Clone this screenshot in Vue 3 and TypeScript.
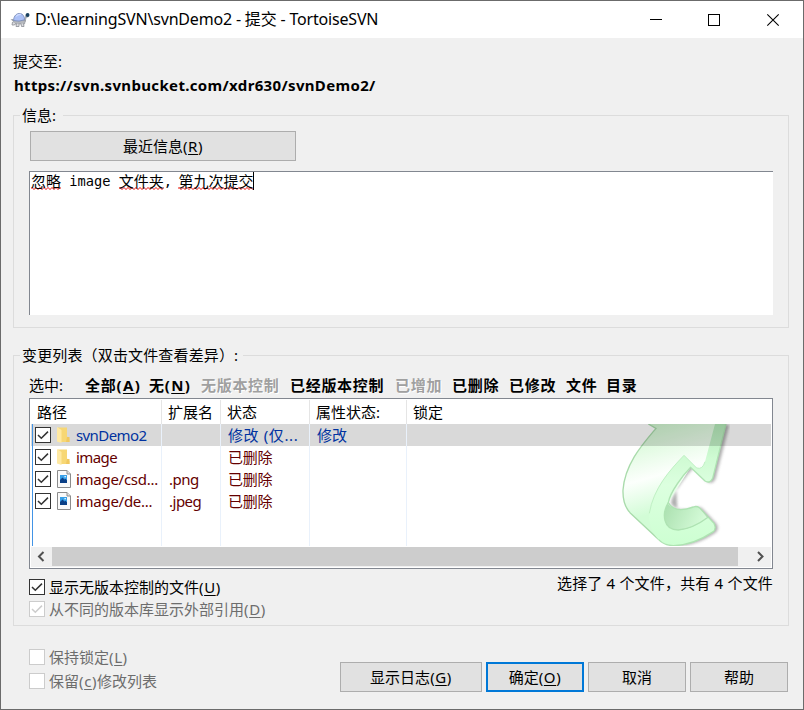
<script setup lang="ts">
import { ref } from 'vue'

interface Filter { label: string; key?: string; disabled?: boolean }
interface FileRow {
  name: string
  ext: string
  status: string
  prop: string
  kind: 'folder' | 'picture'
  state: 'modified' | 'deleted'
  checked: boolean
}

const filters: Filter[] = [
  { label: '全部', key: 'A' },
  { label: '无', key: 'N' },
  { label: '无版本控制', disabled: true },
  { label: '已经版本控制' },
  { label: '已增加', disabled: true },
  { label: '已删除' },
  { label: '已修改' },
  { label: '文件' },
  { label: '目录' },
]

const columns = ['路径', '扩展名', '状态', '属性状态:', '锁定']

const rows = ref<FileRow[]>([
  { name: 'svnDemo2', ext: '', status: '修改 (仅...', prop: '修改', kind: 'folder', state: 'modified', checked: true },
  { name: 'image', ext: '', status: '已删除', prop: '', kind: 'folder', state: 'deleted', checked: true },
  { name: 'image/csd...', ext: '.png', status: '已删除', prop: '', kind: 'picture', state: 'deleted', checked: true },
  { name: 'image/de...', ext: '.jpeg', status: '已删除', prop: '', kind: 'picture', state: 'deleted', checked: true },
])
const selected = ref(0)
const showUnversioned = ref(true)
</script>

<template>
  <div class="window">
    <header class="titlebar">
      <svg class="app-icon" width="20" height="17" viewBox="0 0 20 17">
        <path d="M3 10 L0.5 8.5 L3.5 8 Z" fill="#8d939b" />
        <path d="M14 9 L15.5 3.5 L19 2.5 L18.5 6 L16.5 7 L15.5 11 Z" fill="#a9aeb6" />
        <path d="M3 9.5 H15.5 L14.5 13 H4 Z" fill="#b4b7bc" stroke="#8a8d94" stroke-width=".6" />
        <path d="M2.5 11 L2 14 H4.5 L5.5 12.5 M6.5 12.5 L6 15.5 H9 L9 13 M11 12.5 L11.5 15.5 H14 L13.5 12.5" fill="#dcdde0" stroke="#8a8d94" stroke-width=".8" />
        <path d="M3.6 9.6 C3.4 1 14.4 -0.5 14.6 8.8 Q9 11 3.6 9.6 Z" fill="#abc0f6" stroke="#7486b4" stroke-width=".8" />
        <path d="M6 5.5 Q8 3 11 3.4" fill="none" stroke="#cfdbff" stroke-width="1.2" />
        <circle cx="17.6" cy="4" r="1.9" fill="#17405f" />
      </svg>
      <h1 class="title">D:\learningSVN\svnDemo2 - 提交 - TortoiseSVN</h1>
      <svg class="controls" width="130" height="14" viewBox="0 0 130 14" fill="none" stroke="#000">
        <path d="M0 6.5 H12 M58.5 1.5 H69.5 V12.5 H58.5 Z" shape-rendering="crispEdges" />
        <path d="M117.3 1.3 L128.7 12.7 M128.7 1.3 L117.3 12.7" stroke-width="1.1" />
      </svg>
    </header>

    <main class="client">
      <div class="target">提交至:</div>
      <div class="url">https://svn.svnbucket.com/xdr630/svnDemo2/</div>

      <section class="group message">
        <h2 class="legend">信息:</h2>
        <button class="btn recent">最近信息<span class="key">(<u>R</u>)</span></button>
        <div class="editor">
          <span class="squiggle">忽略</span><span class="mono">&nbsp;image&nbsp;</span><span class="squiggle">文件夹</span><span class="mono">,</span><span class="gap"></span><span class="squiggle">第九次提交</span><span class="caret"></span>
        </div>
      </section>

      <section class="group changes">
        <h2 class="legend long">变更列表（双击文件查看差异）:</h2>
        <div class="filters">
          <span class="filters-label">选中:</span>
          <b v-for="f in filters" :key="f.label" :class="{ off: f.disabled }">{{ f.label }}<span v-if="f.key" class="key">(<u>{{ f.key }}</u>)</span></b>
        </div>

        <div class="list">
          <div class="row head">
            <div v-for="c in columns" :key="c" class="cell">{{ c }}</div>
          </div>
          <div class="body">
            <svg class="watermark" width="110" height="122" viewBox="90 72 330 366">
              <defs>
                <linearGradient id="side" x1="0" y1="0" x2="0.25" y2="1">
                  <stop offset="0" stop-color="#c8f3c8" />
                  <stop offset=".25" stop-color="#e2fbe2" />
                  <stop offset=".5" stop-color="#fcfffc" />
                  <stop offset=".8" stop-color="#d2fcd6" />
                </linearGradient>
                <linearGradient id="front" x1="0" y1="0" x2="0" y2="1">
                  <stop offset="0" stop-color="#b3e9b8" />
                  <stop offset=".28" stop-color="#cffbd3" />
                  <stop offset=".5" stop-color="#dcffdf" />
                  <stop offset="1" stop-color="#cdffd2" />
                </linearGradient>
                <linearGradient id="inner" x1="0" y1="0" x2="1" y2=".3">
                  <stop offset="0" stop-color="#a9dfae" />
                  <stop offset="1" stop-color="#d5fbd8" />
                </linearGradient>
                <filter id="soft" x="-20%" y="-20%" width="140%" height="140%"><feGaussianBlur stdDeviation="5" /></filter>
              </defs>
              <path d="M240 72 L410 72 L368 235 Q360 252 345 243 L302 202 C280 225 240 275 235 308 C250 335 285 328 310 321 Q320 317 328 323 L372 370 Q380 385 370 395 C340 415 300 435 260 435 Z" fill="#777" opacity=".6" filter="url(#soft)" transform="translate(8 2)" />
              <path d="M175 72 L198 85 C160 130 105 190 99 270 C98 300 108 325 120 338 L205 418 L215 340 L302 202 L345 243 L368 235 L405 72 Z" fill="url(#side)" />
              <path d="M175 72 L198 85 C160 130 105 190 99 270 C98 300 108 325 120 338 L205 418" fill="none" stroke="#a9dbab" stroke-width="4" />
              <path d="M232 308 C215 340 218 390 265 390 C300 388 330 370 354 355 L328 323 Q320 317 310 321 C285 330 250 335 232 308 Z" fill="url(#inner)" />
              <path d="M375 72 L345 185 Q338 210 320 204 L282 166 C240 210 190 265 178 340 C175 370 185 395 205 418 Q222 436 250 437 C300 437 340 415 370 395 Q380 385 372 370 L354 352 C330 370 300 388 265 390 C218 390 215 340 235 308 C240 275 280 225 302 202 L345 243 Q360 252 368 235 L408 72 Z" fill="url(#front)" />
              <path d="M345 185 Q338 210 320 204 L282 166 C240 210 190 265 178 340" fill="none" stroke="#c0f0c4" stroke-width="3" />
              <path d="M205 418 Q222 436 250 437 C300 437 340 415 370 395 Q380 385 372 370 L328 323 Q320 317 310 321 C285 330 250 335 235 308 C240 275 280 225 302 202 L345 243 Q360 252 368 235 L408 72" fill="none" stroke="#aee3b2" stroke-width="4" />
              <path d="M354 352 C330 370 300 388 265 390 C218 390 215 340 235 308" fill="none" stroke="#aee3b2" stroke-width="4" />
            </svg>
            <div
              v-for="(r, i) in rows"
              :key="r.name"
              class="row"
              :class="[r.state, r.kind, { selected: i === selected }]"
              @click="selected = i"
            >
              <div class="cell path">
                <svg class="check" width="16" height="16" viewBox="0 0 16 16">
                  <rect x=".5" y=".5" width="15" height="15" fill="#fff" stroke="#333" />
                  <path v-if="r.checked" d="M3 8 L6.3 11.3 L13 4.6" fill="none" stroke="#333" stroke-width="1.5" />
                </svg>
                <svg v-if="r.kind === 'folder'" class="file-icon" width="14" height="18" viewBox="0 0 14 18">
                  <path d="M1 1.5 H10 V10.5 L12.5 13 V16 H2 Z" fill="#f7d774" />
                  <path d="M10 11 H12.5 V16 H9 Z" fill="#f0c75f" />
                  <path d="M0 1 L4.5 4 V17 L0 15.5 Z" fill="#ffe9a2" />
                </svg>
                <svg v-else class="file-icon" width="14" height="18" viewBox="0 0 14 18">
                  <path d="M.5 .5 H10 L13.5 4 V17.5 H.5 Z" fill="#fafafa" stroke="#8c8c8c" />
                  <path d="M10 .5 V4 H13.5" fill="#e4e4e4" stroke="#8c8c8c" />
                  <rect x="3" y="5" width="7" height="8" fill="#37a0e8" />
                  <path d="M3 10 L5.5 7.5 L7.5 9.5 L8.5 8.7 L10 10.2 V13 H3 Z" fill="#0a3f86" />
                  <rect x="7.5" y="6" width="1.3" height="1.3" fill="#fff" />
                </svg>
                <span class="name">{{ r.name }}</span>
              </div>
              <div class="cell ext">{{ r.ext }}</div>
              <div class="cell status">{{ r.status }}</div>
              <div class="cell">{{ r.prop }}</div>
              <div class="cell"></div>
            </div>
            <div class="row filler"><div v-for="c in columns" :key="c" class="cell"></div></div>
          </div>
          <div class="scrollbar">
            <svg width="21" height="20" viewBox="0 0 21 20"><path d="M12.5 5 L8 9.5 L12.5 14" fill="none" stroke="#505050" stroke-width="2" /></svg>
            <div class="thumb"></div>
            <svg width="33" height="20" viewBox="0 0 33 20"><path d="M20 5 L24.5 9.5 L20 14" fill="none" stroke="#505050" stroke-width="2" /></svg>
          </div>
        </div>

        <div class="below">
          <div class="options">
            <label class="option" @click="showUnversioned = !showUnversioned">
              <svg width="16" height="16" viewBox="0 0 16 16">
                <rect x=".5" y=".5" width="15" height="15" fill="#fff" stroke="#333" />
                <path v-if="showUnversioned" d="M3 8 L6.3 11.3 L13 4.6" fill="none" stroke="#333" stroke-width="1.5" />
              </svg>
              <span>显示无版本控制的文件<span class="key">(<u>U</u>)</span></span>
            </label>
            <label class="option dim">
              <svg width="16" height="16" viewBox="0 0 16 16">
                <rect x=".5" y=".5" width="15" height="15" fill="#fff" stroke="#ccc" />
                <path d="M3 8 L6.3 11.3 L13 4.6" fill="none" stroke="#ccc" stroke-width="1.5" />
              </svg>
              <span>从不同的版本库显示外部引用<span class="key">(<u>D</u>)</span></span>
            </label>
          </div>
          <div class="summary">选择了 4 个文件，共有 4 个文件</div>
        </div>
      </section>

      <footer class="footer">
        <div class="keep">
          <label class="option dim">
            <svg width="16" height="16" viewBox="0 0 16 16"><rect x=".5" y=".5" width="15" height="15" fill="#fff" stroke="#ccc" /></svg>
            <span>保持锁定<span class="key">(<u>L</u>)</span></span>
          </label>
          <label class="option dim">
            <svg width="16" height="16" viewBox="0 0 16 16"><rect x=".5" y=".5" width="15" height="15" fill="#fff" stroke="#ccc" /></svg>
            <span>保留<span class="key">(<u>c</u>)</span>修改列表</span>
          </label>
        </div>
        <button class="btn wide">显示日志<span class="key">(<u>G</u>)</span></button>
        <button class="btn primary">确定<span class="key">(<u>O</u>)</span></button>
        <button class="btn">取消</button>
        <button class="btn">帮助</button>
      </footer>
    </main>
  </div>
</template>

<style>
body { overflow: hidden; }
</style>

<style scoped>
* { box-sizing: border-box; }
.window {
  width: 804px;
  height: 710px;
  border: 1px solid #6b6b6b;
  background: #f0f0f0;
  color: #000;
  font: 400 15px/22px "Noto Sans", "Noto Sans CJK SC", sans-serif;
  white-space: nowrap;
  overflow: hidden;
}
h1, h2 { margin: 0; font-weight: inherit; font-size: inherit; }
u { text-underline-offset: 2px; text-decoration-thickness: 1px; text-decoration-skip-ink: none; }
.key { letter-spacing: .6px; }
.titlebar {
  height: 37px;
  display: flex;
  align-items: center;
  padding-left: 9px;
  background: #fff;
}
.title { margin: -2px 0 0 5px; font-size: 16px; letter-spacing: -.18px; }
.controls { margin-left: auto; margin-right: 23px; }
.client { display: flex; flex-direction: column; padding: 12px 14px 0 12px; }
.target { height: 24px; }
.url { height: 41px; padding-left: 1px; font-weight: 700; letter-spacing: .34px; }
.group { border: 1px solid #dcdcdc; padding: 0 15px; }
.message { height: 213px; }
.changes { height: 271px; margin-top: 27px; }
.legend {
  width: max-content;
  margin: -12px 0 0 -9px;
  padding: 0 7px 0 2px;
  background: #f0f0f0;
}
.long { letter-spacing: .15px; padding-right: 5px; }
.btn {
  display: block;
  width: 98px;
  height: 30px;
  padding: 0;
  border: 1px solid #adadad;
  background: #e1e1e1;
  color: #000;
  font: inherit;
  line-height: 28px;
}
.recent { width: 266px; margin: 5px 0 0 1px; }
.editor {
  height: 144px;
  margin-top: 10px;
  padding: 0 0 0 1px;
  display: flex;
  border: solid #828790;
  border-width: 1px 0 0 1px;
  background: #fff;
  line-height: 18px;
}
.mono { font-family: "DejaVu Sans Mono", monospace; font-size: 13.7px; line-height: 19px; }
.gap { width: 6.5px; }
.squiggle {
  height: 18px;
  background:
    linear-gradient(45deg, transparent 40%, #f58a8a 40%, #f58a8a 65%, transparent 65%) 0 100% / 4px 3px repeat-x,
    linear-gradient(-45deg, transparent 40%, #f58a8a 40%, #f58a8a 65%, transparent 65%) 2px 100% / 4px 3px repeat-x;
}
.caret { width: 1px; height: 18px; background: #000; }
.filters {
  display: grid;
  grid-template-columns: 56px 64px 52px 89px 105px 57px 57px 57px 40px auto;
  height: 24px;
  margin-top: 8px;
}
.filters b { letter-spacing: .7px; }
.filters .key { letter-spacing: 1.4px; }
.filters .off { color: #a0a0a0; text-shadow: 1px 1px #fff; }
.list {
  height: 171px;
  border: 1px solid #828790;
  background: #fff;
  padding: 0 1px;
}
.row {
  position: relative;
  display: grid;
  grid-template-columns: 131px 59px 89px 97px 1fr;
  height: 22px;
}
.cell { border-right: 1px solid #e9f1fb; padding-left: 7px; overflow: hidden; }
.cell:last-child { border-right: 0; }
.head { height: 25px; }
.head .cell { margin-top: 1px; padding-left: 6px; line-height: 25px; border-color: #e5e5e5; }
.body { position: relative; height: 122px; overflow: hidden; }
.body .row .cell:first-child { border-left: 1px solid #4294e6; margin-left: 1px; }
.watermark { position: absolute; left: 589px; top: 0; }
.selected { background: rgba(0, 0, 0, .15); }
.modified { color: #0032a0; }
.deleted { color: #640000; }
.path { display: flex; align-items: center; padding-left: 2px; }
.name { letter-spacing: -.6px; }
.picture .name { letter-spacing: -.28px; }
.ext { letter-spacing: -.5px; }
.deleted .status { letter-spacing: -.2px; }
.modified .status { letter-spacing: .6px; }
.file-icon { margin: 0 5px 0 6px; flex: none; }
.check { flex: none; }
.filler { height: 34px; }
.scrollbar { display: flex; height: 20px; margin-top: 1px; background: #f0f0f0; }
.thumb { flex: 1; height: 19px; background: #cdcdcd; }
.below { display: flex; justify-content: space-between; margin-top: 7px; }
.option { display: flex; align-items: center; gap: 4px; height: 22px; }
.dim { color: #6d6d6d; }
.summary { margin-top: -4px; letter-spacing: .18px; }
.footer { display: flex; gap: 4px; margin-top: 20px; }
.keep { margin: 0 auto 0 16px; display: grid; gap: 2px; }
.footer .btn { margin-top: 16px; }
.footer .wide { width: 142px; }
.footer .primary { border: 2px solid #0078d7; line-height: 26px; }
.footer .btn:last-child { margin-right: 1px; }
</style>
